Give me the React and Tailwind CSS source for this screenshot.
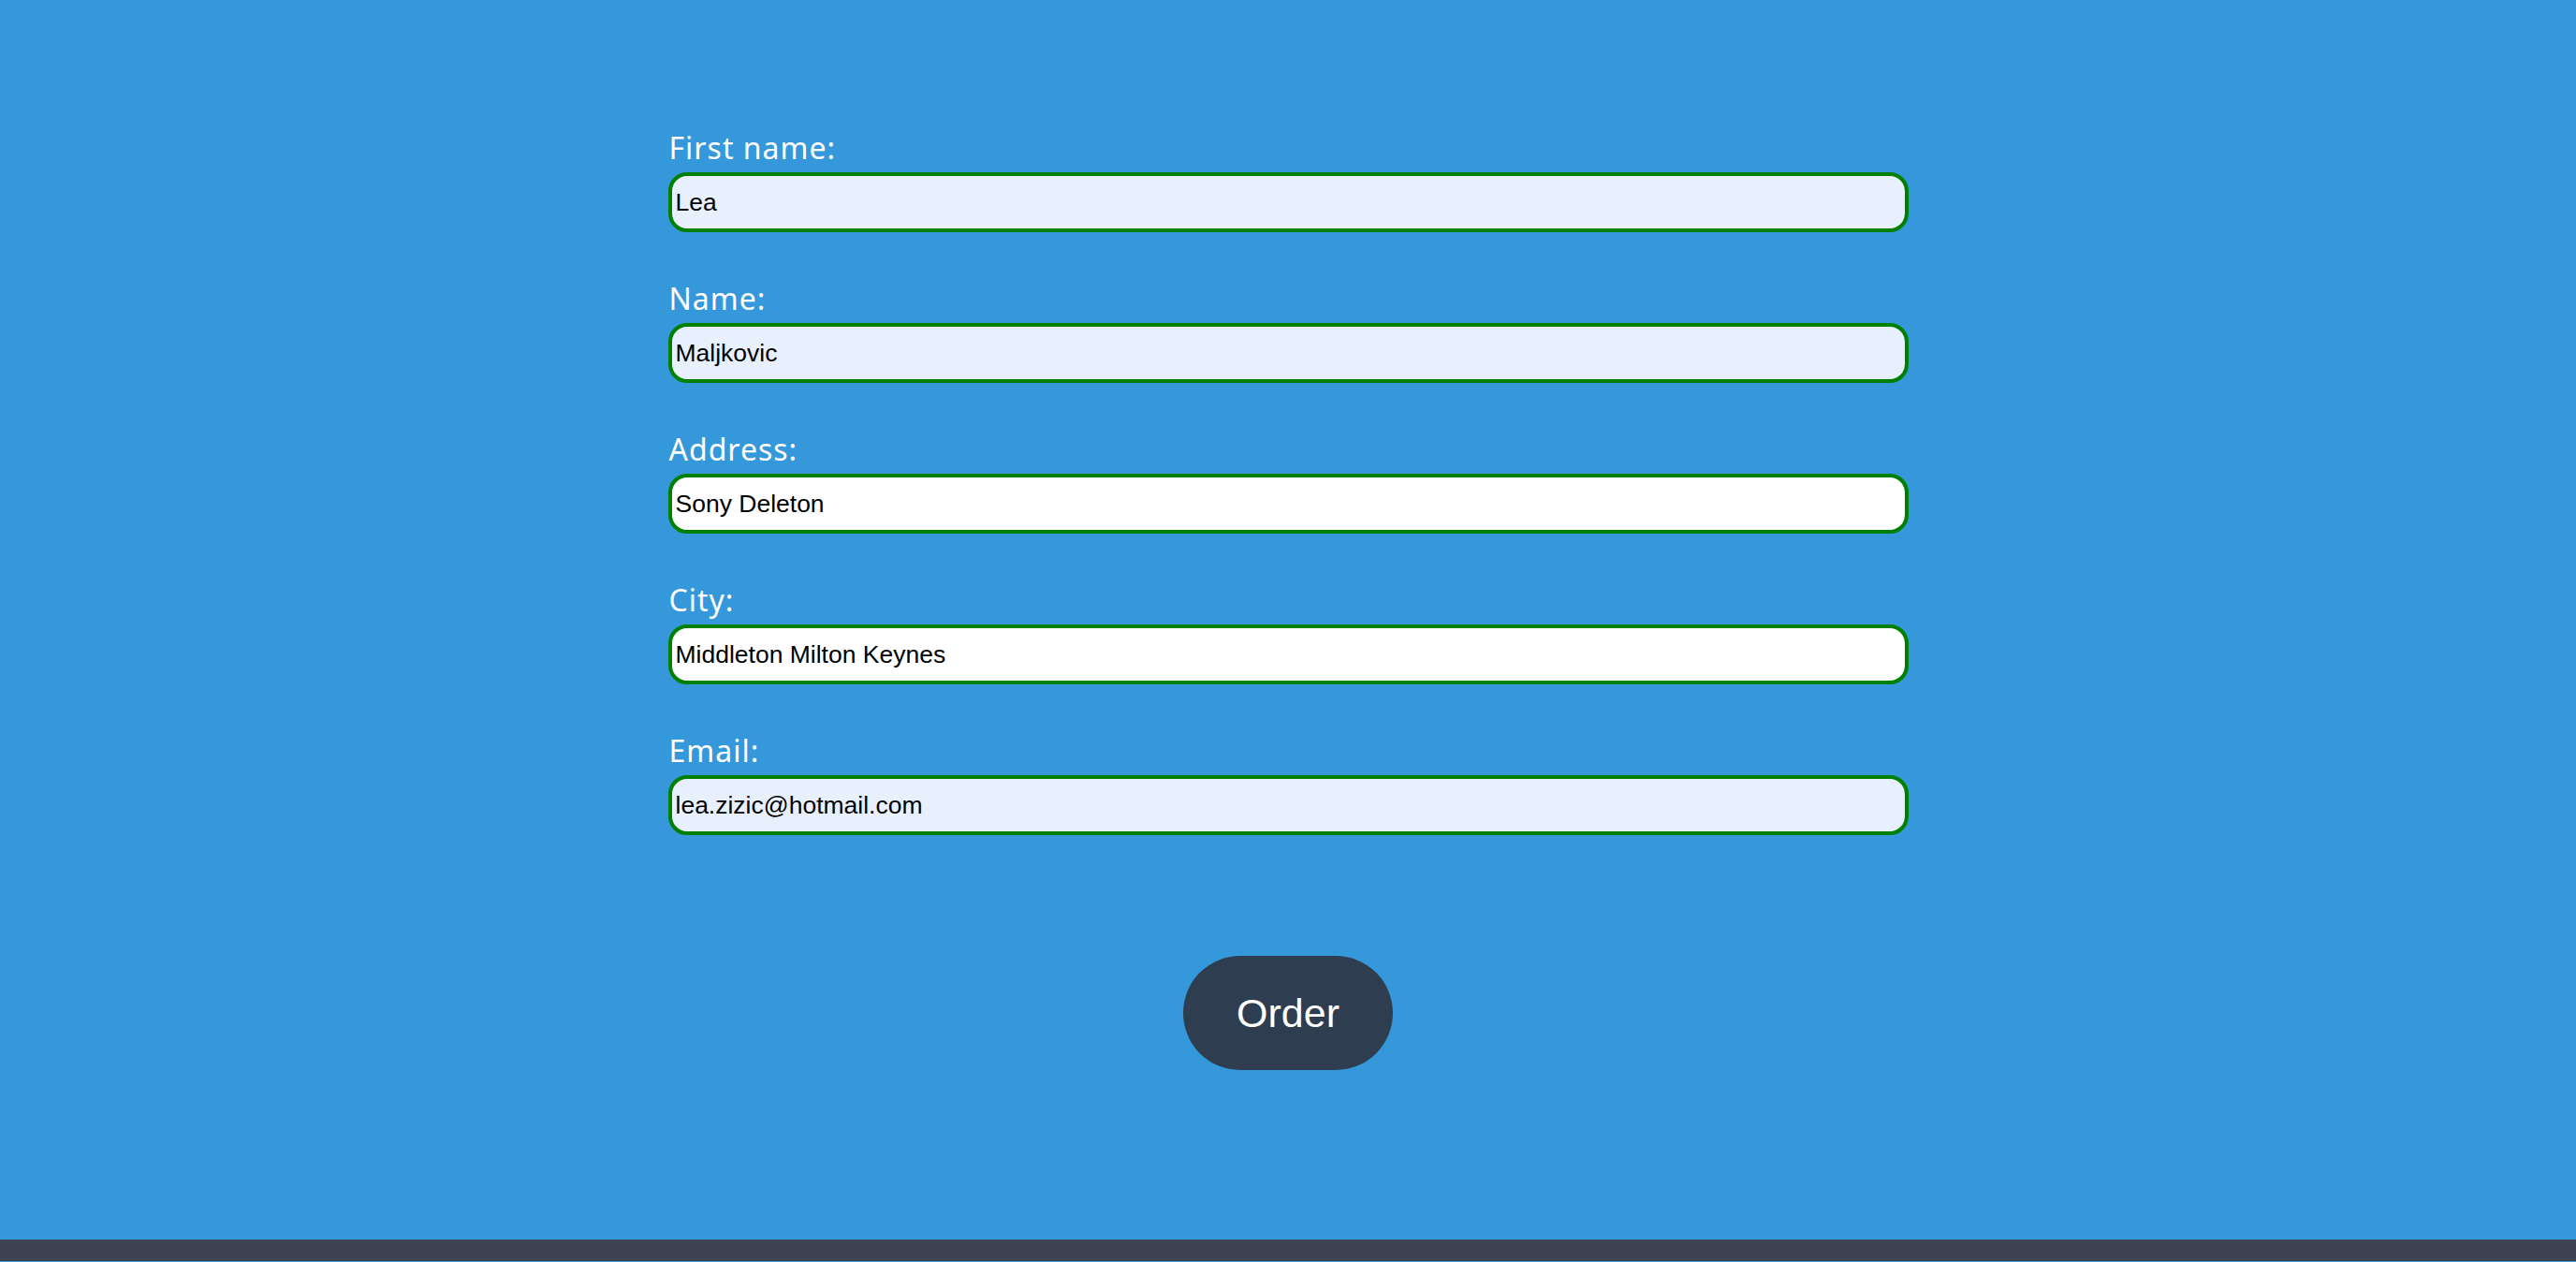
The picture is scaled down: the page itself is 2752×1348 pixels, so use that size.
export default function App() {
  const fields = [
    { label: "First name:", value: "Lea", auto: true },
    { label: "Name:", value: "Maljkovic", auto: true },
    { label: "Address:", value: "Sony Deleton", auto: false },
    { label: "City:", value: "Middleton Milton Keynes", auto: false },
    { label: "Email:", value: "lea.zizic@hotmail.com", auto: true },
  ];
  return (
    <div className="w-full min-h-[1348px] bg-[#3598db]">
      <div className="h-[1324px] flex flex-col items-center pt-[138px]">
        <div className="w-[1325px] flex flex-col gap-[51px]">
          {fields.map((f) => (
            <div key={f.label} className="flex flex-col">
              <label className="text-white text-[32px] leading-[40px] tracking-[1px] font-['Noto_Sans',sans-serif] pl-[1px]">
                {f.label}
              </label>
              <input
                readOnly
                value={f.value}
                className={`mt-[6px] h-[64px] w-full rounded-[20px] border-[4px] border-[#008000] px-[4px] text-[26.5px] text-black font-['Liberation_Sans',Arial,sans-serif] outline-none ${f.auto ? "bg-[#e8f0fe]" : "bg-white"}`}
              />
            </div>
          ))}
        </div>
        <button className="mt-[129px] w-[224px] h-[122px] rounded-full bg-[#2e3e50] text-white text-[43px] font-['Liberation_Sans',Arial,sans-serif]">
          Order
        </button>
      </div>
      <div className="h-[23px] bg-[#3d4350]"></div>
    </div>
  );
}
